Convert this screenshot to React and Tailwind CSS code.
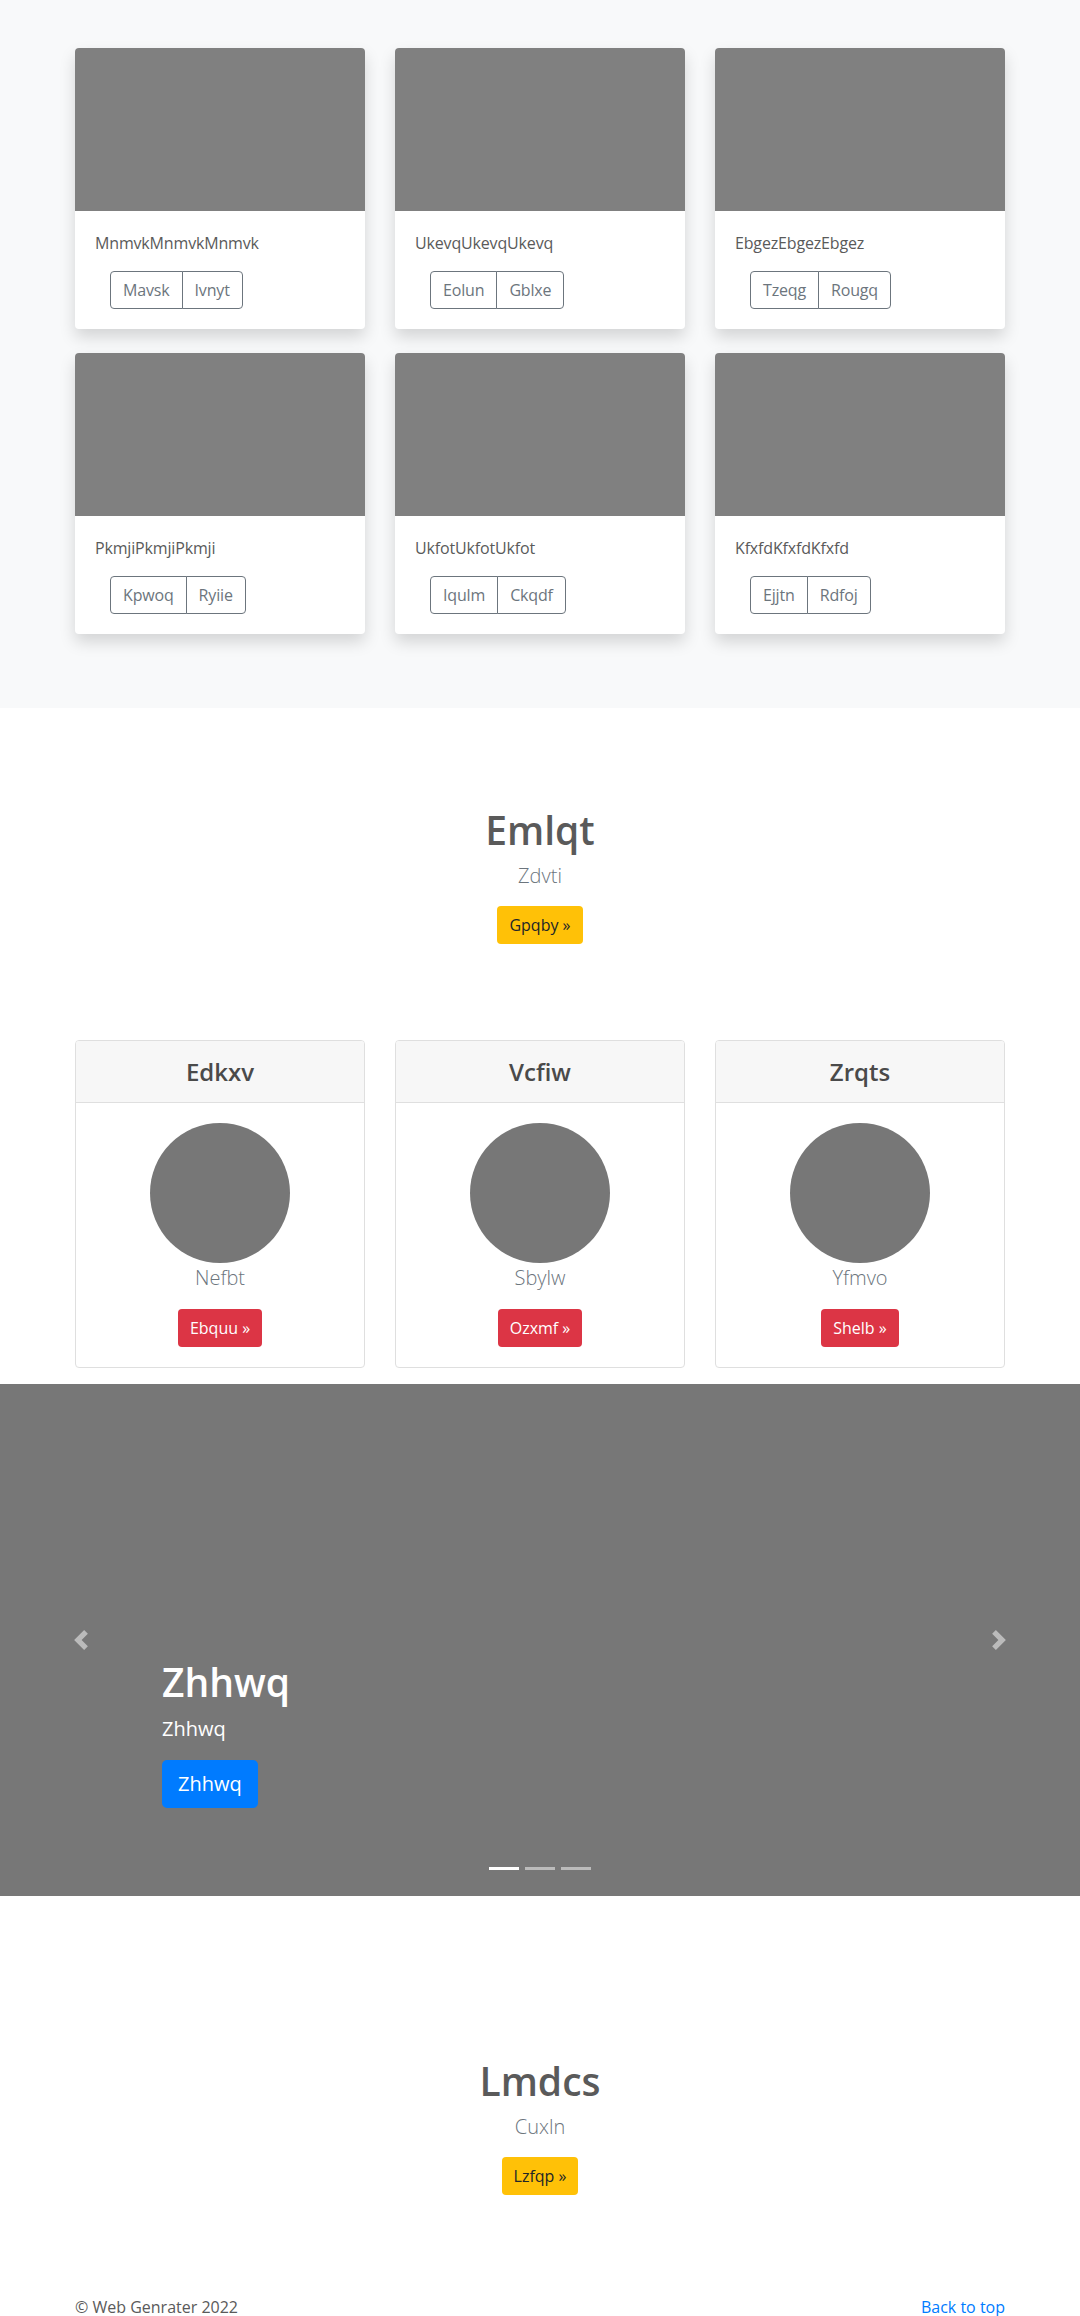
import React from "react";

const albumCards = [
  { text: "MnmvkMnmvkMnmvk", a: "Mavsk", b: "Ivnyt" },
  { text: "UkevqUkevqUkevq", a: "Eolun", b: "Gblxe" },
  { text: "EbgezEbgezEbgez", a: "Tzeqg", b: "Rougq" },
  { text: "PkmjiPkmjiPkmji", a: "Kpwoq", b: "Ryiie" },
  { text: "UkfotUkfotUkfot", a: "Iqulm", b: "Ckqdf" },
  { text: "KfxfdKfxfdKfxfd", a: "Ejjtn", b: "Rdfoj" },
];

const pricing = [
  { title: "Edkxv", name: "Nefbt", btn: "Ebquu »" },
  { title: "Vcfiw", name: "Sbylw", btn: "Ozxmf »" },
  { title: "Zrqts", name: "Yfmvo", btn: "Shelb »" },
];

function AlbumCard({ text, a, b }) {
  return (
    <div className="bg-white rounded-[4px] overflow-hidden shadow-[0_8px_16px_rgba(0,0,0,0.15)]">
      <div className="h-[163px] bg-[#808080]" />
      <div className="p-5">
        <p className="text-[16px] leading-6 mb-4 tracking-[-0.01em]">{text}</p>
        <div className="ml-[15px] inline-flex">
          <button className="h-[38px] px-3 text-[16px] leading-6 tracking-[-0.01em] text-[#6c757d] border border-[#6c757d] rounded-l-[4px] bg-white">
            {a}
          </button>
          <button className="h-[38px] px-3 -ml-px text-[16px] leading-6 tracking-[-0.01em] text-[#6c757d] border border-[#6c757d] rounded-r-[4px] bg-white">
            {b}
          </button>
        </div>
      </div>
    </div>
  );
}

function PriceCard({ title, name, btn }) {
  return (
    <div className="border border-[#dfdfdf] rounded-[4px] overflow-hidden text-center bg-white">
      <div className="h-[62px] bg-[#f7f7f7] border-b border-[#dfdfdf] flex items-center justify-center">
        <h4 className="text-[24px] leading-[29px] font-semibold text-[#4a4a4a]">{title}</h4>
      </div>
      <div className="py-5 flex flex-col items-center">
        <div className="w-[140px] h-[140px] rounded-full bg-[#777777]" />
        <p className="text-[20px] leading-[30px] font-light text-[#6c757d] mb-4">{name}</p>
        <button className="h-[38px] px-3 text-[16px] leading-6 text-white bg-[#dc3545] rounded-[4px]">
          {btn}
        </button>
      </div>
    </div>
  );
}

function Chevron({ dir }) {
  return (
    <svg width="20" height="20" viewBox="0 0 8 8" fill="#ffffff" className="opacity-50">
      {dir === "prev" ? (
        <path d="M5.25 0l-4 4 4 4 1.5-1.5L4.25 4l2.5-2.5L5.25 0z" />
      ) : (
        <path d="M2.75 0l-1.5 1.5L3.75 4l-2.5 2.5L2.75 8l4-4-4-4z" />
      )}
    </svg>
  );
}

export default function App() {
  return (
    <div className="font-['Open_Sans','Noto_Sans',sans-serif] text-[#5a5a5a] bg-white">
      {/* Album */}
      <section className="bg-[#f8f9fa] pt-[48px] pb-[74px]">
        <div className="w-[930px] mx-auto grid grid-cols-3 gap-x-[30px] gap-y-[24px]">
          {albumCards.map((c) => (
            <AlbumCard key={c.text} {...c} />
          ))}
        </div>
      </section>

      {/* Jumbotron 1 */}
      <section className="pt-[98px] text-center">
        <h1 className="text-[39px] leading-[48px] font-semibold mb-[7px]">Emlqt</h1>
        <p className="text-[20px] leading-[30px] font-light text-[#6c757d] mb-[15px]">Zdvti</p>
        <button className="h-[38px] px-3 text-[16px] leading-6 text-[#212529] bg-[#ffc107] rounded-[4px]">
          Gpqby »
        </button>
      </section>

      {/* Pricing cards */}
      <section className="mt-[96px]">
        <div className="w-[930px] mx-auto grid grid-cols-3 gap-x-[30px]">
          {pricing.map((p) => (
            <PriceCard key={p.title} {...p} />
          ))}
        </div>
      </section>

      {/* Carousel */}
      <section className="mt-[16px] relative h-[512px] bg-[#777777]">
        <div className="absolute left-0 top-0 bottom-0 w-[162px] flex items-center justify-center">
          <Chevron dir="prev" />
        </div>
        <div className="absolute right-0 top-0 bottom-0 w-[162px] flex items-center justify-center">
          <Chevron dir="next" />
        </div>
        <div className="absolute left-[162px] right-[162px] bottom-[52px] pb-[20px] text-white">
          <h1 className="text-[39px] leading-[48px] font-semibold mb-2">Zhhwq</h1>
          <p className="text-[20px] leading-[30px] mb-4">Zhhwq</p>
          <p className="mb-4">
            <button className="h-[48px] px-4 text-[20px] leading-[30px] text-white bg-[#007bff] rounded-[5px]">
              Zhhwq
            </button>
          </p>
        </div>
        <div className="absolute left-0 right-0 bottom-[26px] flex justify-center gap-[6px]">
          <span className="w-[30px] h-[3px] bg-white" />
          <span className="w-[30px] h-[3px] bg-white/50" />
          <span className="w-[30px] h-[3px] bg-white/50" />
        </div>
      </section>

      {/* Jumbotron 2 */}
      <section className="pt-[161px] text-center">
        <h1 className="text-[39px] leading-[48px] font-semibold mb-[7px]">Lmdcs</h1>
        <p className="text-[20px] leading-[30px] font-light text-[#6c757d] mb-[15px]">Cuxln</p>
        <button className="h-[38px] px-3 text-[16px] leading-6 text-[#212529] bg-[#ffc107] rounded-[4px]">
          Lzfqp »
        </button>
      </section>

      {/* Footer */}
      <footer className="pt-[100px] pb-[24px]">
        <div className="w-[930px] mx-auto flex justify-between text-[16px] leading-6">
          <p>© Web Genrater 2022</p>
          <a href="#" className="text-[#007bff]">Back to top</a>
        </div>
      </footer>
    </div>
  );
}
